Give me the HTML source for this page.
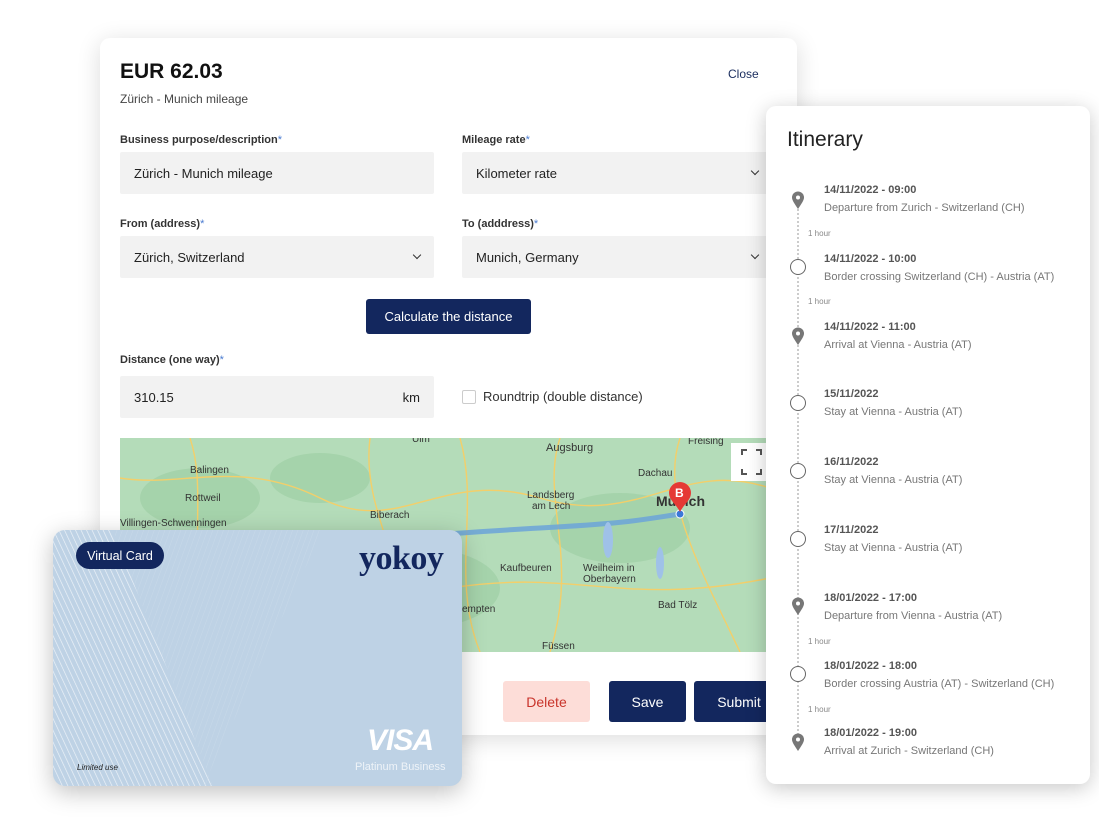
<!DOCTYPE html>
<html><head><meta charset="utf-8">
<style>
*{box-sizing:border-box;margin:0;padding:0}
body{width:1099px;height:825px;background:#fff;font-family:"Liberation Sans",sans-serif;position:relative;overflow:hidden;color:#222}
.abs{position:absolute}
.main{left:100px;top:38px;width:697px;height:697px;background:#fff;border-radius:10px;box-shadow:0 4px 24px rgba(0,0,0,.14)}
.lbl{font-size:11px;font-weight:bold;color:#333}
.lbl i{color:#4a7bd0;font-style:normal;font-weight:normal}
.inp{background:#f2f2f2;height:42px;font-size:13px;color:#222;padding:0 14px;display:flex;align-items:center;justify-content:space-between;border-radius:2px}
.chev{width:6px;height:6px;border-right:1.5px solid #333;border-bottom:1.5px solid #333;transform:rotate(45deg);margin-top:-4px}
.btn{display:flex;align-items:center;justify-content:center;font-size:14px;border-radius:3px}
.itin{left:766px;top:106px;width:324px;height:678px;background:#fff;border-radius:10px;box-shadow:0 4px 20px rgba(0,0,0,.22)}
.it{position:absolute;left:58px;font-size:11px}
.it b{display:block;color:#555;font-size:11px}
.it span{display:block;color:#777;margin-top:6px}
.hr{position:absolute;left:42px;font-size:8px;color:#888}
.ring{position:absolute;left:24px;width:16px;height:16px;border:1.6px solid #666;border-radius:50%;background:#fff}
.card{left:53px;top:530px;width:409px;height:256px;border-radius:12px;background:#bed2e5;box-shadow:0 6px 24px rgba(0,0,0,.25);overflow:hidden}
</style></head><body>
<div class="abs main">
  <div class="abs" style="left:20px;top:22px;font-size:21px;font-weight:bold;color:#111">EUR 62.03</div>
  <div class="abs" style="left:628px;top:29px;font-size:12px;color:#1a2d5e">Close</div>
  <div class="abs" style="left:20px;top:54px;font-size:12px;color:#444">Zürich - Munich mileage</div>
  <div class="abs lbl" style="left:20px;top:96px">Business purpose/description<i>*</i></div>
  <div class="abs inp" style="left:20px;top:114px;width:314px">Zürich - Munich mileage</div>
  <div class="abs lbl" style="left:362px;top:96px">Mileage rate<i>*</i></div>
  <div class="abs inp" style="left:362px;top:114px;width:310px">Kilometer rate<div class="chev"></div></div>
  <div class="abs lbl" style="left:20px;top:180px">From (address)<i>*</i></div>
  <div class="abs inp" style="left:20px;top:198px;width:314px">Zürich, Switzerland<div class="chev"></div></div>
  <div class="abs lbl" style="left:362px;top:180px">To (adddress)<i>*</i></div>
  <div class="abs inp" style="left:362px;top:198px;width:310px">Munich, Germany<div class="chev"></div></div>
  <div class="abs btn" style="left:266px;top:261px;width:165px;height:35px;background:#13275e;color:#fff;font-size:13px">Calculate the distance</div>
  <div class="abs lbl" style="left:20px;top:316px">Distance (one way)<i>*</i></div>
  <div class="abs inp" style="left:20px;top:338px;width:314px">310.15<span>km</span></div>
  <div class="abs" style="left:362px;top:352px;width:14px;height:14px;border:1px solid #ccc;border-radius:2px"></div>
  <div class="abs" style="left:383px;top:351px;font-size:13px;color:#333">Roundtrip (double distance)</div>
  <svg class="abs" style="left:20px;top:400px" width="650" height="214" viewBox="0 0 650 214">
    <rect width="650" height="214" fill="#b4dcb9"/>
    <g fill="#a5d3ab"><ellipse cx="80" cy="60" rx="60" ry="30"/><ellipse cx="300" cy="150" rx="80" ry="40"/><ellipse cx="500" cy="90" rx="70" ry="35"/><ellipse cx="200" cy="40" rx="50" ry="25"/></g>
    <g fill="none" stroke="#f3cf6a" stroke-width="1.4">
      <path d="M0 40 C60 50 120 20 200 60 S320 30 420 60 560 20 650 50"/>
      <path d="M70 0 C90 60 60 120 100 214"/>
      <path d="M250 0 C240 80 300 140 280 214"/>
      <path d="M440 0 C420 60 460 120 430 214"/>
      <path d="M560 0 C540 60 580 130 620 214"/>
      <path d="M0 150 C100 130 200 170 330 150 S500 170 650 140"/>
      <path d="M340 0 C360 70 330 140 360 214"/>
    </g>
    <path d="M0 107 C80 105 140 105 220 102 S330 95 420 90 520 82 560 76" fill="none" stroke="#6ba3d8" stroke-width="5" opacity=".85"/>
    <g fill="#9fc1e8"><ellipse cx="488" cy="102" rx="5" ry="18"/><ellipse cx="540" cy="125" rx="4" ry="16"/></g>
    <g font-family="Liberation Sans" font-size="10" fill="#333">
      <text x="70" y="35">Balingen</text><text x="65" y="63">Rottweil</text><text x="0" y="88">Villingen-Schwenningen</text>
      <text x="250" y="80">Biberach</text><text x="292" y="4">Ulm</text><text x="426" y="13" font-size="11">Augsburg</text>
      <text x="518" y="38">Dachau</text><text x="568" y="6">Freising</text><text x="407" y="60">Landsberg</text><text x="412" y="71">am Lech</text>
      <text x="380" y="133">Kaufbeuren</text><text x="463" y="133">Weilheim in</text><text x="463" y="144">Oberbayern</text>
      <text x="538" y="170">Bad Tölz</text><text x="342" y="174">empten</text><text x="422" y="211">Füssen</text>
      <text x="536" y="68" font-size="14" font-weight="bold">Munich</text>
    </g>
    <circle cx="560" cy="76" r="4" fill="#3b78d8" stroke="#fff"/>
    <path d="M560 74 C556 66 549 62 549 55 A11 11 0 0 1 571 55 C571 62 564 66 560 74Z" fill="#e53935"/>
    <text x="555" y="59" font-size="12" font-weight="bold" fill="#fff" font-family="Liberation Sans">B</text>
    <rect x="611" y="5" width="36" height="38" fill="#fff"/>
    <path d="M622 17v-5h5M636 12h5v5M641 31v5h-5M627 36h-5v-5" stroke="#555" stroke-width="2" fill="none"/>
  </svg>
  <div class="abs btn" style="left:403px;top:643px;width:87px;height:41px;background:#fdddd8;color:#c9342b">Delete</div>
  <div class="abs btn" style="left:509px;top:643px;width:77px;height:41px;background:#13275e;color:#fff">Save</div>
  <div class="abs btn" style="left:594px;top:643px;width:90px;height:41px;background:#13275e;color:#fff">Submit</div>
</div>

<div class="abs itin">
  <div class="abs" style="left:21px;top:22px;font-size:21px;color:#222">Itinerary</div>
  <div class="abs" style="left:31px;top:96px;height:540px;border-left:2px dotted #ccc"></div>
  <svg class="abs" style="left:25px;top:85px" width="14" height="18" viewBox="0 0 14 18"><path d="M7 18C3 12 1 9 1 6.5a6 6 0 0 1 12 0C13 9 11 12 7 18Z" fill="#777"/><circle cx="7" cy="6.5" r="2" fill="#fff"/></svg>
  <div class="it" style="top:78px"><b>14/11/2022 - 09:00</b><span>Departure from Zurich - Switzerland (CH)</span></div>
  <div class="hr" style="top:123px">1 hour</div>
  <div class="ring" style="top:153px"></div>
  <div class="it" style="top:147px"><b>14/11/2022 - 10:00</b><span>Border crossing Switzerland (CH) - Austria (AT)</span></div>
  <div class="hr" style="top:191px">1 hour</div>
  <svg class="abs" style="left:25px;top:221px" width="14" height="18" viewBox="0 0 14 18"><path d="M7 18C3 12 1 9 1 6.5a6 6 0 0 1 12 0C13 9 11 12 7 18Z" fill="#777"/><circle cx="7" cy="6.5" r="2" fill="#fff"/></svg>
  <div class="it" style="top:215px"><b>14/11/2022 - 11:00</b><span>Arrival at Vienna - Austria (AT)</span></div>
  <div class="ring" style="top:289px"></div>
  <div class="it" style="top:282px"><b>15/11/2022</b><span>Stay at Vienna - Austria (AT)</span></div>
  <div class="ring" style="top:357px"></div>
  <div class="it" style="top:350px"><b>16/11/2022</b><span>Stay at Vienna - Austria (AT)</span></div>
  <div class="ring" style="top:425px"></div>
  <div class="it" style="top:418px"><b>17/11/2022</b><span>Stay at Vienna - Austria (AT)</span></div>
  <svg class="abs" style="left:25px;top:491px" width="14" height="18" viewBox="0 0 14 18"><path d="M7 18C3 12 1 9 1 6.5a6 6 0 0 1 12 0C13 9 11 12 7 18Z" fill="#777"/><circle cx="7" cy="6.5" r="2" fill="#fff"/></svg>
  <div class="it" style="top:486px"><b>18/01/2022 - 17:00</b><span>Departure from Vienna - Austria (AT)</span></div>
  <div class="hr" style="top:531px">1 hour</div>
  <div class="ring" style="top:560px"></div>
  <div class="it" style="top:554px"><b>18/01/2022 - 18:00</b><span>Border crossing Austria (AT) - Switzerland (CH)</span></div>
  <div class="hr" style="top:599px">1 hour</div>
  <svg class="abs" style="left:25px;top:627px" width="14" height="18" viewBox="0 0 14 18"><path d="M7 18C3 12 1 9 1 6.5a6 6 0 0 1 12 0C13 9 11 12 7 18Z" fill="#777"/><circle cx="7" cy="6.5" r="2" fill="#fff"/></svg>
  <div class="it" style="top:621px"><b>18/01/2022 - 19:00</b><span>Arrival at Zurich - Switzerland (CH)</span></div>
</div>

<div class="abs card">
  <svg class="abs" style="left:0;top:0" width="409" height="256">
    <defs><pattern id="p" width="5" height="5" patternUnits="userSpaceOnUse" patternTransform="rotate(-25)"><line x1="0" y1="0" x2="0" y2="5" stroke="#eef3f9" stroke-width="1.3"/></pattern>
    <pattern id="q" width="5" height="5" patternUnits="userSpaceOnUse" patternTransform="rotate(20)"><line x1="0" y1="0" x2="0" y2="5" stroke="#cbdbea" stroke-width="1"/></pattern></defs>
    <polygon points="0,0 60,0 160,256 0,256" fill="url(#p)"/>
    <polygon points="60,0 270,0 150,256 160,256" fill="url(#q)" opacity=".7"/>
  </svg>
  <div class="abs" style="left:23px;top:12px;width:88px;height:27px;border-radius:14px;background:#13275e;color:#fff;font-size:12.5px;display:flex;align-items:center;justify-content:center">Virtual Card</div>
  <div class="abs" style="left:306px;top:10px;font-family:'Liberation Serif',serif;font-size:34px;font-weight:bold;color:#13275e;letter-spacing:-.5px">yokoy</div>
  <div class="abs" style="left:314px;top:194px;font-size:30px;font-weight:bold;font-style:italic;color:#fff;letter-spacing:-1px">VISA</div>
  <div class="abs" style="left:302px;top:231px;font-size:11px;color:#eef3f8">Platinum Business</div>
  <div class="abs" style="left:24px;top:233px;font-size:8px;font-style:italic;color:#222">Limited use</div>
</div>
</body></html>
